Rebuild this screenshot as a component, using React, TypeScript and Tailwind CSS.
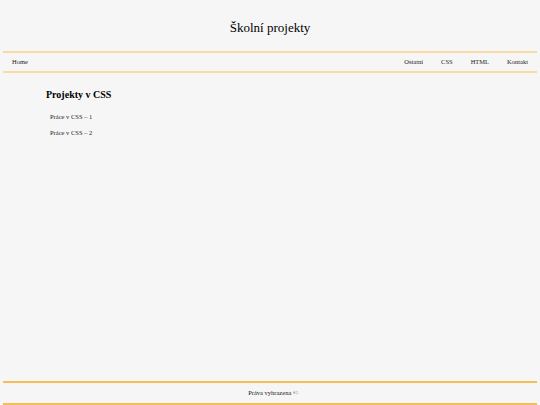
export default function App() {
  const right = ["Ostatní", "CSS", "HTML", "Kontakt"];
  return (
    <div className="flex min-h-screen flex-col bg-[#f6f6f6] font-['Liberation_Serif',serif] text-black">
      <header className="flex h-[51px] items-center justify-center pt-[4px]">
        <h1 className="text-[13px] leading-none">Školní projekty</h1>
      </header>

      <nav className="mx-[3px] flex h-[22px] items-center justify-between border-y-2 border-[#f8dba3] px-[9px] text-[6.5px] text-[#222]">
        <a href="#">Home</a>
        <ul className="flex items-center gap-[18px]">
          {right.map((item) => (
            <li key={item}>
              <a href="#">{item}</a>
            </li>
          ))}
        </ul>
      </nav>

      <main className="flex-1 pl-[46px] pt-[17px]">
        <h2 className="text-[10px] font-bold leading-none">Projekty v CSS</h2>
        <ul className="mt-[13px] flex flex-col gap-[9px] pl-[4px] text-[6.5px] leading-[7px] text-[#222]">
          <li>Práce v CSS – 1</li>
          <li>Práce v CSS – 2</li>
        </ul>
      </main>

      <footer className="mx-[3px] flex h-[24px] items-center justify-center border-y-2 border-[#f5bd52] pl-[6px] text-[6.5px] text-[#222]">
        Práva vyhrazena ©
      </footer>
    </div>
  );
}
